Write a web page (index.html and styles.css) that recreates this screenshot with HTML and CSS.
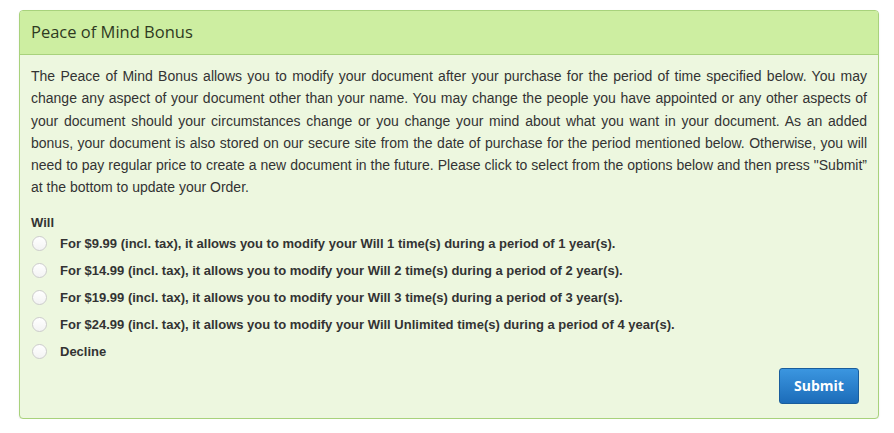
FILE: index.html
```html
<!DOCTYPE html>
<html lang="en">

<head>
  <meta charset="UTF-8" />
  <title>Peace of Mind Bonus</title>
  <link rel="stylesheet" href="styles.css">
</head>

<body>
  <div class="panel">
    <div class="panel-heading">Peace of Mind Bonus</div>
    <div class="panel-body">
      <p class="intro">The Peace of Mind Bonus allows you to modify your document after your purchase for the period of time specified below. You may change any aspect of your document other than your name. You may change the people you have appointed or any other aspects of your document should your circumstances change or you change your mind about what you want in your document. As an added bonus, your document is also stored on our secure site from the date of purchase for the period mentioned below. Otherwise, you will need to pay regular price to create a new document in the future. Please click to select from the options below and then press "Submit” at the bottom to update your Order.</p>

      <div class="group-label">Will</div>
      <div class="options">
        <label class="option"><span class="radio"></span>For $9.99 (incl. tax), it allows you to modify your Will 1 time(s) during a period of 1 year(s).</label>
        <label class="option"><span class="radio"></span>For $14.99 (incl. tax), it allows you to modify your Will 2 time(s) during a period of 2 year(s).</label>
        <label class="option"><span class="radio"></span>For $19.99 (incl. tax), it allows you to modify your Will 3 time(s) during a period of 3 year(s).</label>
        <label class="option"><span class="radio"></span>For $24.99 (incl. tax), it allows you to modify your Will Unlimited time(s) during a period of 4 year(s).</label>
        <label class="option"><span class="radio"></span>Decline</label>
      </div>

      <div class="actions">
        <button class="submit-btn">Submit</button>
      </div>
    </div>
  </div>
</body>

</html>
```

FILE: styles.css
```css
body {
  margin: 0;
  padding: 10px 15px 0 19px;
  background-color: #fff;
  font-family: 'Liberation Sans', Arial, sans-serif;
}

.panel {
  border: 1px solid #a8d27c;
  border-radius: 4px;
  background-color: #edf7df;
  box-shadow: 0 1px 2px rgba(0, 0, 0, 0.08);
}

.panel-heading {
  background-color: #cdeea1;
  border-bottom: 1px solid #a8d27c;
  border-radius: 3px 3px 0 0;
  padding: 9px 11px 11px;
  font-family: 'Open Sans', sans-serif;
  font-size: 16.5px;
  color: #2f3a22;
}

.panel-body {
  padding: 10px 11px 14px;
}

.intro {
  margin: 0;
  font-size: 14px;
  line-height: 22.3px;
  color: #333;
  text-align: justify;
}

.group-label {
  margin-top: 16px;
  font-size: 13px;
  font-weight: bold;
  color: #333;
}

.options {
  display: flex;
  flex-direction: column;
  gap: 11px;
  margin-top: 6px;
}

.option {
  display: flex;
  align-items: center;
  gap: 13px;
  font-size: 13px;
  font-weight: bold;
  color: #333;
  line-height: 16px;
}

.radio {
  width: 13px;
  height: 13px;
  margin-left: 1px;
  border-radius: 50%;
  border: 1px solid #ccc;
  background: linear-gradient(#fff, #f3f3f3);
}

.actions {
  display: flex;
  justify-content: flex-end;
  margin-top: 8px;
  padding-right: 8px;
}

.submit-btn {
  width: 80px;
  height: 36px;
  border: 1px solid #1a5d9c;
  border-radius: 3px;
  background: linear-gradient(#3b96e0, #1c6cb9);
  color: #fff;
  font-family: 'Open Sans', sans-serif;
  font-size: 14px;
  font-weight: bold;
  cursor: pointer;
}
```
